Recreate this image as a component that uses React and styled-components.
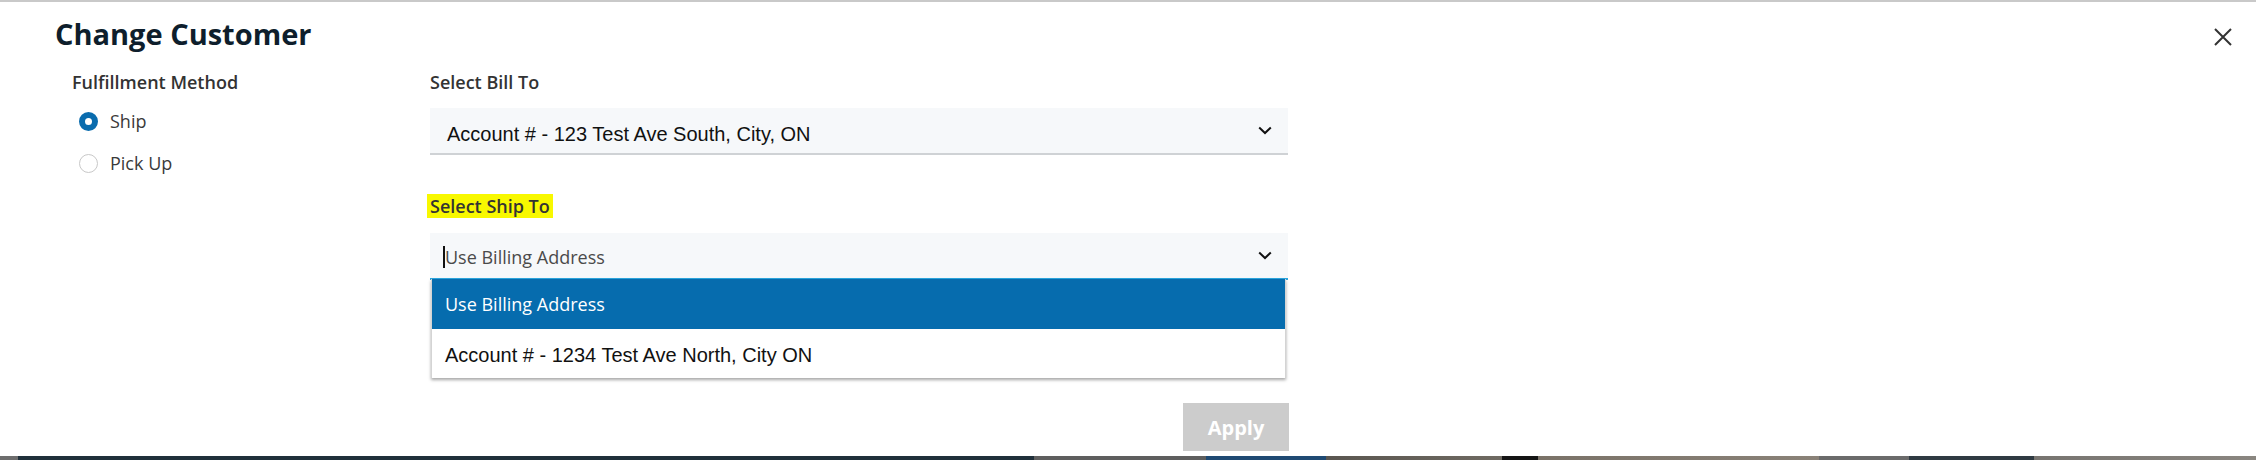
import React from "react";
import styled, { createGlobalStyle } from "styled-components";

const Global = createGlobalStyle`
  html, body { margin: 0; padding: 0; background: #ffffff; }
  body { font-family: "Open Sans", "Liberation Sans", Arial, sans-serif; }
  * { box-sizing: border-box; }
`;

const Page = styled.div`
  width: 2256px;
  height: 460px;
  display: flex;
  flex-direction: column;
  overflow: hidden;
`;

const Modal = styled.div`
  height: 456px;
  background: #ffffff;
  border-top: 2px solid #c9c9c9;
  display: flex;
  flex-direction: column;
`;

const BackdropStrip = styled.div`
  height: 4px;
  background: linear-gradient(
    to right,
    #6d6d6d 0px, #6d6d6d 18px,
    #20303a 18px, #20303a 1034px,
    #5e5e5e 1034px, #5e5e5e 1206px,
    #1f4a73 1206px, #1f4a73 1326px,
    #5a5650 1326px, #6f6a62 1502px,
    #151515 1502px, #151515 1538px,
    #7a7268 1538px, #8a8278 1819px,
    #6b6b6b 1819px, #6b6b6b 1909px,
    #2f3a42 1909px, #2f3a42 2034px,
    #777470 2034px, #8a8680 2256px
  );
`;

const Header = styled.div`
  display: flex;
  justify-content: space-between;
  align-items: flex-start;
  padding: 13px 24px 0 55px;
`;

const Title = styled.h2`
  margin: 0;
  font-family: "Open Sans", sans-serif;
  font-size: 29px;
  line-height: 38px;
  font-weight: 700;
  color: #0e1e2c;
`;

const CloseButton = styled.button`
  border: 0;
  padding: 0;
  background: transparent;
  width: 18px;
  height: 18px;
  margin-top: 13px;
  display: flex;
  color: #333;
  cursor: pointer;
`;

const Body = styled.div`
  display: flex;
  padding: 17px 0 0 72px;
`;

const LeftCol = styled.div`
  width: 358px;
  display: flex;
  flex-direction: column;
`;

const RightCol = styled.div`
  width: 858px;
  display: flex;
  flex-direction: column;
`;

const Label = styled.div`
  font-family: "Open Sans", sans-serif;
  font-size: 18px;
  line-height: 24px;
  font-weight: 600;
  color: #333333;
`;

const Highlight = styled.span`
  background: #f8f800;
  padding: 0 3px;
  margin-left: -3px;
`;

const RadioGroup = styled.div`
  display: flex;
  flex-direction: column;
  gap: 18px;
  margin-top: 15px;
  padding-left: 7px;
`;

const RadioRow = styled.label`
  display: flex;
  align-items: center;
  gap: 12px;
  height: 24px;
`;

const RadioDot = styled.span`
  width: 19px;
  height: 19px;
  border-radius: 50%;
  flex: none;
  background: #ffffff;
  border: ${(p) => (p.$checked ? "6px solid #0a6cae" : "1px solid #c8c8c8")};
`;

const RadioText = styled.span`
  font-family: "Open Sans", sans-serif;
  font-size: 18px;
  line-height: 24px;
  color: #3a3a3a;
`;

const Field = styled.div`
  display: flex;
  flex-direction: column;
  gap: ${(p) => p.$gap || 14}px;
  margin-top: ${(p) => p.$top || 0}px;
`;

const SelectWrap = styled.div`
  position: relative;
`;

const SelectBox = styled.div`
  height: 47px;
  display: flex;
  align-items: center;
  justify-content: space-between;
  padding: 0 16px 0 ${(p) => (p.$focused ? 13 : 17)}px;
  background: #f6f8fa;
  border-bottom: 2px solid ${(p) => (p.$focused ? "#2ba6de" : "#cfd2d5")};
`;

const SelectValue = styled.span`
  font-family: "Liberation Sans", Arial, sans-serif;
  font-size: 20px;
  line-height: 23px;
  color: #111111;
  padding-top: 8px;
`;

const InputText = styled.span`
  display: flex;
  align-items: center;
  font-family: "Open Sans", sans-serif;
  font-size: 18px;
  line-height: 24px;
  color: #4a4a4a;
  padding-top: 2px;
`;

const Caret = styled.span`
  width: 2px;
  height: 22px;
  background: #111;
`;

const Chevron = styled.svg`
  width: 14px;
  height: 9px;
  flex: none;
`;

const Menu = styled.ul`
  position: absolute;
  top: calc(100% - 1px);
  left: 1px;
  right: 2px;
  margin: 0;
  padding: 0;
  list-style: none;
  background: #ffffff;
  border-left: 1px solid #d4d4d4;
  border-right: 1px solid #d4d4d4;
  box-shadow: 0 2px 3px rgba(0, 0, 0, 0.35);
`;

const MenuItem = styled.li`
  height: ${(p) => (p.$active ? 50 : 49)}px;
  display: flex;
  align-items: center;
  padding-left: 13px;
  padding-top: ${(p) => (p.$sans ? 4 : 0)}px;
  background: ${(p) => (p.$active ? "#066cae" : "#ffffff")};
  color: ${(p) => (p.$active ? "#ffffff" : "#111111")};
  font-family: ${(p) =>
    p.$sans ? '"Liberation Sans", Arial, sans-serif' : '"Open Sans", sans-serif'};
  font-size: ${(p) => (p.$sans ? 20 : 18)}px;
`;

const Actions = styled.div`
  display: flex;
  justify-content: flex-end;
  margin-top: 123px;
`;

const ApplyButton = styled.button`
  width: 106px;
  height: 48px;
  margin-right: -1px;
  border: 0;
  background: #cccccc;
  color: #ffffff;
  font-family: "Open Sans", sans-serif;
  font-weight: 700;
  font-size: 20px;
`;

const ChevronIcon = () => (
  <Chevron viewBox="0 0 14 9">
    <path d="M1.2 1.5 L7 7 L12.8 1.5" fill="none" stroke="#111" strokeWidth="2" />
  </Chevron>
);

export default function App() {
  return (
    <>
      <Global />
      <Page>
        <Modal>
          <Header>
            <Title>Change Customer</Title>
            <CloseButton aria-label="Close">
              <svg width="18" height="18" viewBox="0 0 18 18">
                <path d="M1 1 L17 17 M17 1 L1 17" stroke="#333" strokeWidth="2" fill="none" />
              </svg>
            </CloseButton>
          </Header>
          <Body>
            <LeftCol>
              <Label>Fulfillment Method</Label>
              <RadioGroup>
                <RadioRow>
                  <RadioDot $checked />
                  <RadioText>Ship</RadioText>
                </RadioRow>
                <RadioRow>
                  <RadioDot />
                  <RadioText>Pick Up</RadioText>
                </RadioRow>
              </RadioGroup>
            </LeftCol>
            <RightCol>
              <Field>
                <Label>Select Bill To</Label>
                <SelectBox>
                  <SelectValue>Account # - 123 Test Ave South, City, ON</SelectValue>
                  <ChevronIcon />
                </SelectBox>
              </Field>
              <Field $top={39} $gap={15}>
                <Label>
                  <Highlight>Select Ship To</Highlight>
                </Label>
                <SelectWrap>
                  <SelectBox $focused>
                    <InputText>
                      <Caret />
                      Use Billing Address
                    </InputText>
                    <ChevronIcon />
                  </SelectBox>
                  <Menu>
                    <MenuItem $active>Use Billing Address</MenuItem>
                    <MenuItem $sans>Account # - 1234 Test Ave North, City ON</MenuItem>
                  </Menu>
                </SelectWrap>
              </Field>
              <Actions>
                <ApplyButton>Apply</ApplyButton>
              </Actions>
            </RightCol>
          </Body>
        </Modal>
        <BackdropStrip />
      </Page>
    </>
  );
}
